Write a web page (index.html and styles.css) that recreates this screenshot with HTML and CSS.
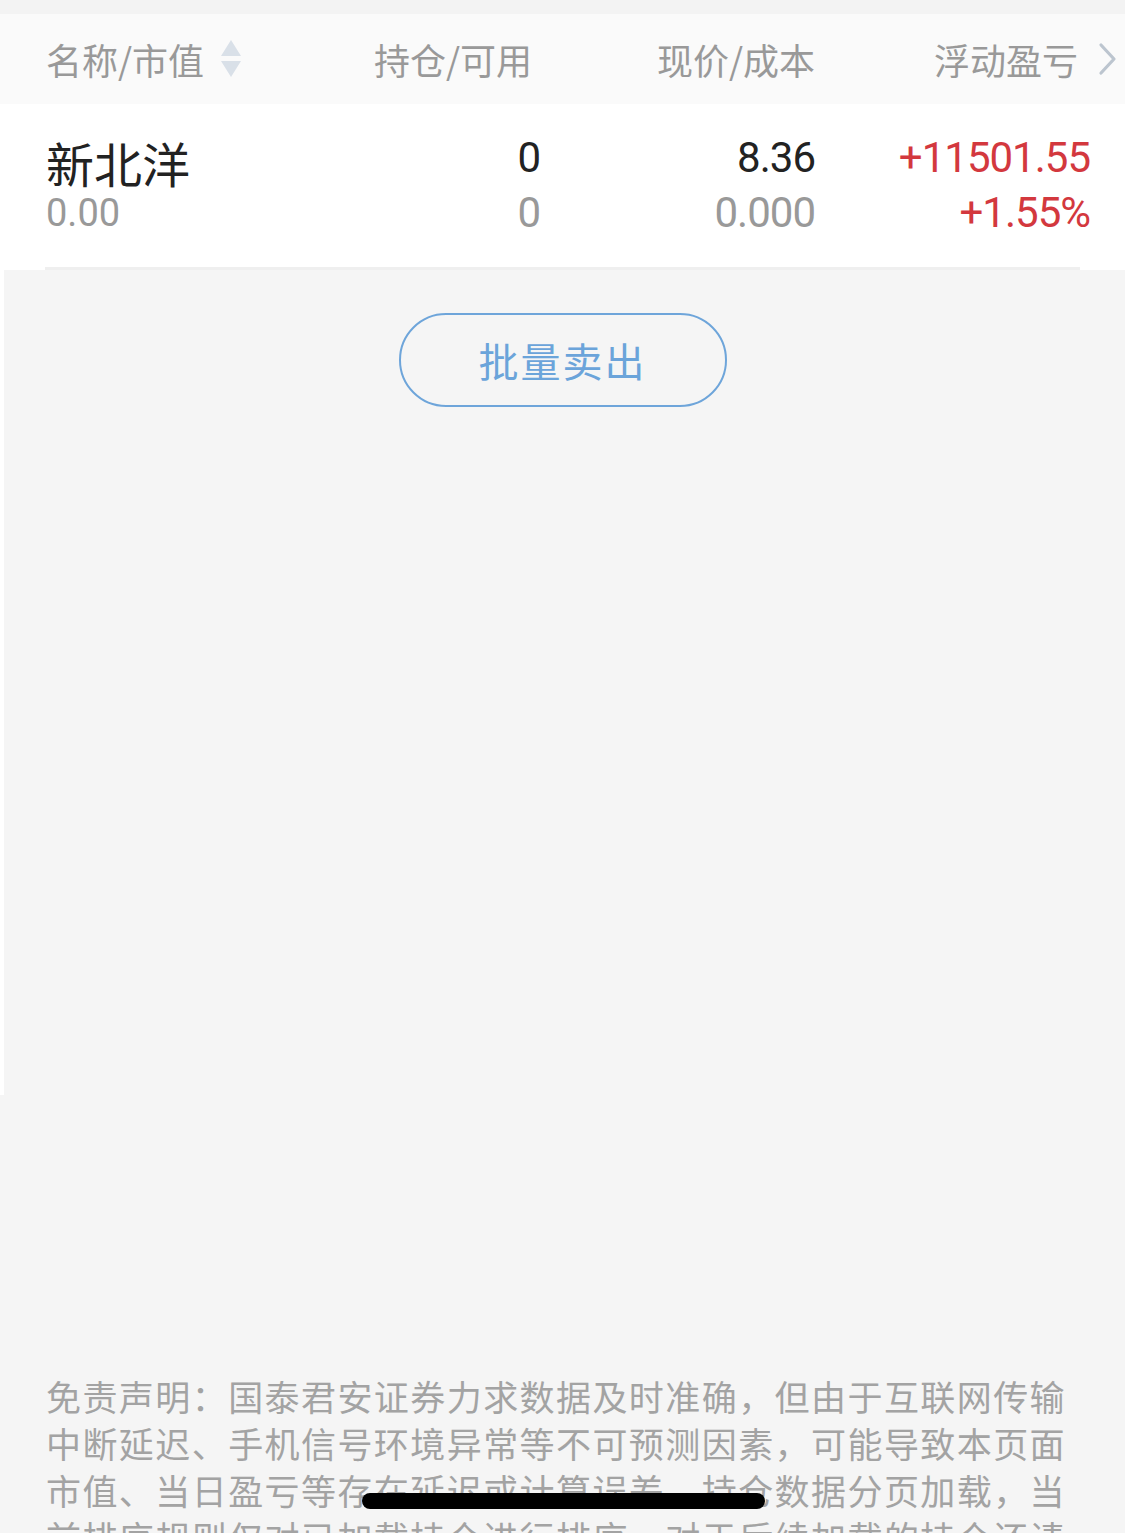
FILE: index.html
```html
<!DOCTYPE html>
<html lang="zh-CN">
<head>
    <meta charset="UTF-8">
    <meta name="viewport" content="width=device-width, initial-scale=1.0">
    <title>持仓</title>
    <link rel="stylesheet" href="styles.css">
</head>
<body>
    <div class="top-strip"></div>

    <div class="thead">
        <div class="th th-name">
            名称/市值
            <svg class="sort-icon" width="22" height="40" viewBox="0 0 22 40">
                <path d="M11 1 L21 17 L1 17 Z" fill="#d9e0e8"/>
                <path d="M1 22 L21 22 L11 38 Z" fill="#d9e0e8"/>
            </svg>
        </div>
        <div class="th">持仓/可用</div>
        <div class="th">现价/成本</div>
        <div class="th th-last">
            浮动盈亏
            <svg class="chevron" width="20" height="34" viewBox="0 0 20 34">
                <path d="M3 3 L16 17 L3 31" fill="none" stroke="#bcc5cf" stroke-width="3.2" stroke-linecap="round" stroke-linejoin="round"/>
            </svg>
        </div>
    </div>

    <div class="row">
        <div class="row-inner">
            <div class="cell cell-name">
                <div class="name">新北洋</div>
                <div class="sub">0.00</div>
            </div>
            <div class="cell cell-num">
                <div class="val">0</div>
                <div class="val muted">0</div>
            </div>
            <div class="cell cell-num">
                <div class="val">8.36</div>
                <div class="val muted">0.000</div>
            </div>
            <div class="cell cell-num">
                <div class="val up">+11501.55</div>
                <div class="val up">+1.55%</div>
            </div>
        </div>
    </div>

    <div class="main">
        <div class="edge"></div>
        <div class="main-body">
            <button class="sell-btn">批量卖出</button>
        </div>
    </div>

    <p class="disclaimer">免责声明：国泰君安证券力求数据及时准确，但由于互联网传输中断延迟、手机信号环境异常等不可预测因素，可能导致本页面市值、当日盈亏等存在延迟或计算误差。持仓数据分页加载，当前排序规则仅对已加载持仓进行排序，对于后续加载的持仓还请下拉加载后再进行排序。</p>

    <div class="home-indicator"></div>
</body>
</html>
```

FILE: styles.css
```css
* { margin: 0; padding: 0; box-sizing: border-box; }
html, body { width: 1125px; height: 1533px; overflow: hidden; }
body {
    background: #f5f5f5;
    font-family: Roboto, "Noto Sans CJK SC", sans-serif;
    color: #222;
}

.top-strip { height: 14px; background: #f3f3f3; }

/* header */
.thead {
    height: 90px;
    background: #fafafa;
    display: grid;
    grid-template-columns: 1fr 240px 283px 303px;
    align-items: center;
    padding: 0 7px 0 46px;
    font-family: "Noto Sans CJK SC", sans-serif;
    font-size: 36px;
    color: #999;
}
.th { text-align: right; line-height: 40px; white-space: nowrap; }
.th-name { text-align: left; display: flex; align-items: center; }
.th-last { display: flex; align-items: center; justify-content: flex-end; }
.sort-icon { margin-left: 16px; }
.chevron { margin-left: 20px; }

/* holding row */
.row { background: #fff; }
.row-inner {
    height: 166px;
    display: grid;
    grid-template-columns: 1fr 240px 275px 275px;
    padding: 26px 35px 0 46px;
    position: relative;
}
.row-inner::after {
    content: "";
    position: absolute;
    left: 45px; right: 45px; bottom: 0;
    height: 3px;
    background: #efefef;
}
.cell-num { text-align: right; }
.name {
    margin-top: 5px;
    font-family: "Noto Sans CJK SC", sans-serif;
    font-size: 48px;
    line-height: 54px;
    color: #222;
}
.sub { margin-top: 4px; font-size: 38px; line-height: 40px; color: #999; }
.val { font-size: 42px; line-height: 55px; letter-spacing: -1px; color: #222; }
.val.muted { color: #999; }
.val.up { color: #d3383e; }

/* empty area */
.main { height: 1102px; display: flex; }
.edge { width: 4px; height: 825px; background: #fff; }
.main-body { flex: 1; display: flex; justify-content: center; align-items: flex-start; padding-top: 43px; }
.sell-btn {
    width: 328px;
    height: 94px;
    border: 2px solid #6ea5da;
    border-radius: 47px;
    background: transparent;
    color: #6ba4da;
    font-family: "Noto Sans CJK SC", sans-serif;
    font-size: 40px;
    letter-spacing: 2px;
    margin-left: -4px;
}

.disclaimer {
    padding: 0 60px 0 46px;
    font-family: "Noto Sans CJK SC", sans-serif;
    font-size: 35px;
    line-height: 47px;
    letter-spacing: 0.4px;
    text-align: justify;
    color: #a3a3a3;
}

.home-indicator {
    position: fixed;
    left: 362px;
    bottom: 24px;
    width: 403px;
    height: 16px;
    border-radius: 8px;
    background: #000;
}
```
